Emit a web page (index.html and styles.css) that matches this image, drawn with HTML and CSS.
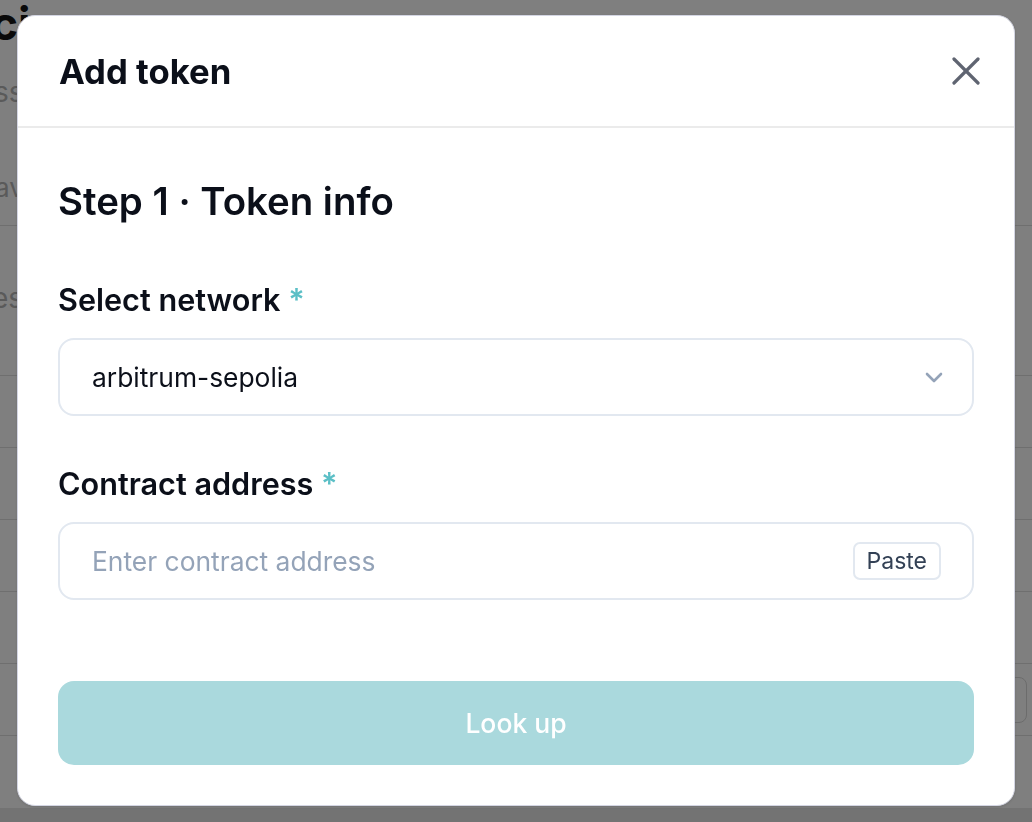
FILE: index.html
```html
<!DOCTYPE html>
<html lang="en">
<head>
<meta charset="utf-8">
<title>Add token</title>
<link rel="stylesheet" href="styles.css">
</head>
<body>
<div class="page">
  <div class="page-head">
    <div class="page-title">ci</div>
    <div class="page-sub">ss</div>
    <div class="page-note">av</div>
  </div>
  <div class="row row-tall"><span class="row-text">es</span></div>
  <div class="row"></div>
  <div class="row"></div>
  <div class="row"></div>
  <div class="row"></div>
  <div class="row row-action"><span class="row-btn"></span></div>
  <div class="page-foot"></div>
</div>

<div class="overlay">
  <div class="modal">
    <div class="modal-head">
      <h2 class="modal-title">Add token</h2>
      <button class="close" aria-label="Close">
        <svg width="28" height="28" viewBox="0 0 28 28" fill="none" stroke="#5f6471" stroke-width="3.2" stroke-linecap="round"><line x1="2" y1="2" x2="26" y2="26"/><line x1="26" y1="2" x2="2" y2="26"/></svg>
      </button>
    </div>
    <div class="modal-body">
      <h3 class="step-title">Step 1 · Token info</h3>
      <label class="field-label">Select network <span class="req">*</span></label>
      <div class="field select-field">
        <span class="field-value">arbitrum-sepolia</span>
        <svg class="chevron" width="18" height="11" viewBox="0 0 18 11" fill="none" stroke="#94a3b8" stroke-width="2.6" stroke-linecap="round" stroke-linejoin="round"><path d="M2 2 L9 9 L16 2"/></svg>
      </div>
      <label class="field-label">Contract address <span class="req">*</span></label>
      <div class="field input-field">
        <span class="placeholder">Enter contract address</span>
        <button class="paste">Paste</button>
      </div>
      <button class="primary">Look up</button>
    </div>
  </div>
</div>
</body>
</html>
```
FILE: styles.css
```css
html, body {
  margin: 0;
  padding: 0;
}
body {
  width: 1032px;
  height: 822px;
  overflow: hidden;
  background: #ffffff;
  font-family: Inter, "Noto Sans", sans-serif;
}

/* background page */
.page {
  display: flex;
  flex-direction: column;
}
.page-head {
  height: 225px;
  border-bottom: 1px solid #dedede;
  display: flex;
  flex-direction: column;
}
.page-title {
  font-size: 46px;
  line-height: 46px;
  font-weight: 700;
  color: #151515;
  margin-left: -9px;
}
.page-sub {
  font-size: 28px;
  line-height: 34px;
  color: #b4b4b4;
  margin-top: 29px;
  margin-left: -6px;
}
.page-note {
  font-size: 26px;
  line-height: 32px;
  color: #b4b4b4;
  margin-top: 63px;
  margin-left: -5px;
}
.row {
  height: 71px;
  border-bottom: 1px solid #dedede;
  display: flex;
  align-items: center;
}
.row-tall {
  height: 149px;
  align-items: flex-start;
}
.row-text {
  font-size: 28px;
  line-height: 34px;
  color: #b4b4b4;
  margin-top: 55px;
  margin-left: -8px;
}
.row-action {
  justify-content: flex-end;
}
.row-btn {
  width: 110px;
  height: 44px;
  border: 1px solid #d8d8d8;
  border-radius: 8px;
  margin-right: 5px;
}
.page-foot {
  margin-top: 72px;
  height: 30px;
  background: #e6e6e6;
}

/* overlay + modal */
.overlay {
  position: fixed;
  inset: 0;
  background: rgba(0, 0, 0, 0.5);
  display: flex;
  justify-content: center;
  align-items: flex-start;
  padding: 15px 17px;
  box-sizing: border-box;
}
.modal {
  width: 100%;
  background: #ffffff;
  border: 1px solid #d4d6e3;
  border-radius: 18px;
  box-sizing: border-box;
  box-shadow: 0 1px 3px rgba(0, 0, 0, 0.12);
  color: #0b0f19;
}
.modal-head {
  display: flex;
  align-items: center;
  justify-content: space-between;
  padding: 33px 34px 33px 41px;
  border-bottom: 2px solid #ebebeb;
}
.modal-title {
  margin: 0;
  font-size: 34.7px;
  line-height: 44px;
  font-weight: 700;
}
.close {
  border: 0;
  background: none;
  padding: 0;
  width: 28px;
  height: 28px;
  display: flex;
}
.modal-body {
  padding: 50px 40px 40px 40px;
  display: flex;
  flex-direction: column;
}
.step-title {
  margin: 0 0 58px 0;
  font-size: 38.4px;
  line-height: 46px;
  font-weight: 600;
}
.field-label {
  display: block;
  font-size: 30.6px;
  line-height: 36px;
  font-weight: 600;
  margin: 0 0 20px 0;
}
.req {
  color: #5bbfc6;
}
.field {
  height: 78px;
  box-sizing: border-box;
  border: 2px solid #e2e8f0;
  border-radius: 16px;
  display: flex;
  align-items: center;
  justify-content: space-between;
  font-size: 26.4px;
}
.select-field {
  padding: 0 29px 0 32px;
  margin-bottom: 50px;
}
.field-value {
  color: #0b0f19;
}
.chevron {
  display: block;
}
.input-field {
  padding: 0 31px 0 32px;
}
.placeholder {
  color: #94a3b8;
}
.paste {
  height: 38px;
  box-sizing: border-box;
  border: 2px solid #e2e8f0;
  border-radius: 7px;
  background: #ffffff;
  padding: 0 12px;
  font-family: Inter, "Noto Sans", sans-serif;
  font-size: 23px;
  color: #334155;
}
.primary {
  margin-top: 81px;
  height: 84px;
  width: 100%;
  border: 0;
  border-radius: 16px;
  background: #aad9dd;
  color: #ffffff;
  font-family: Inter, "Noto Sans", sans-serif;
  font-size: 26.5px;
  font-weight: 500;
}
```
